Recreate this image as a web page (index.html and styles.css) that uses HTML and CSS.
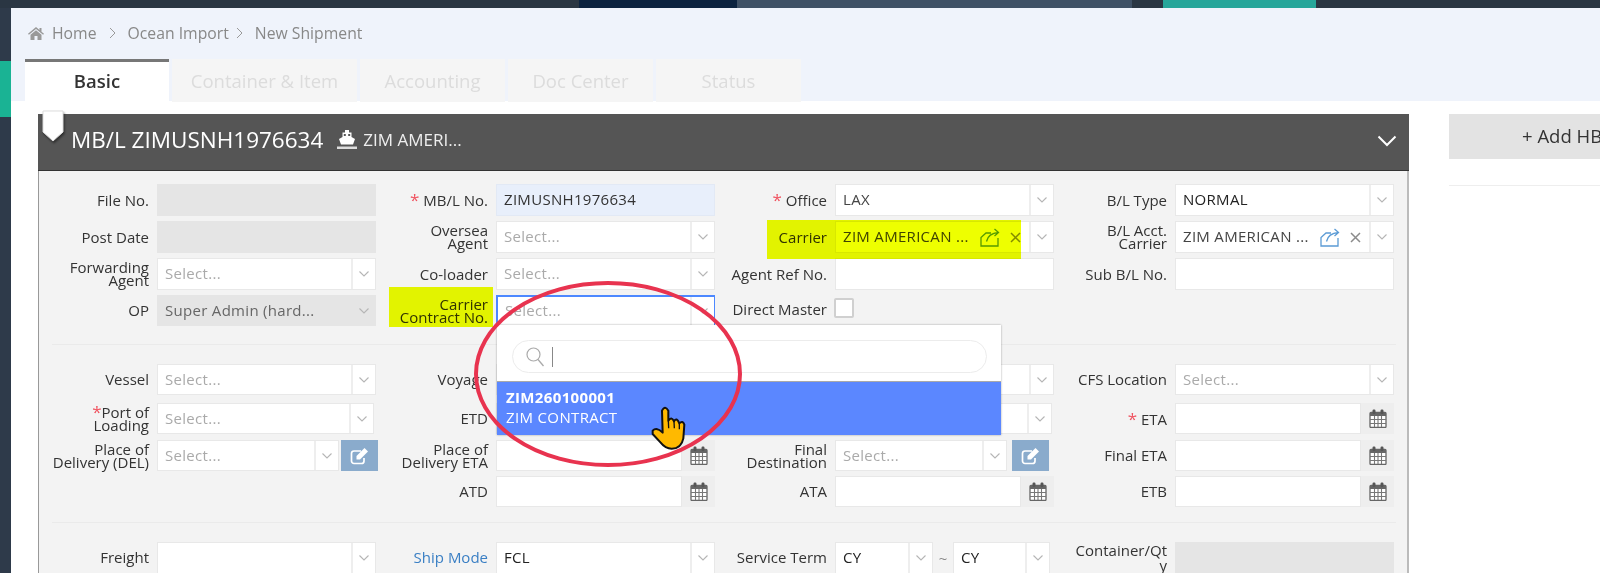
FILE: index.html
```html
<!DOCTYPE html>
<html lang="en">
<head>
<meta charset="utf-8">
<title>New Shipment</title>
<link rel="stylesheet" href="styles.css">
</head>
<body>
<svg class="defs" aria-hidden="true">
  <symbol id="chev" viewBox="0 0 12 8"><path d="M1.500 1.500 6 6l4.500-4.500" fill="none" stroke="#b5b5b5" stroke-width="1.100"/></symbol>
  <symbol id="cal" viewBox="0 0 18 19"><rect x="1" y="3.500" width="16" height="15" rx="1" fill="#fff" stroke="#666" stroke-width="1.300"/><rect x="1" y="3" width="16" height="4" fill="#666"/><path d="M1 10.500h16M1 14.500h16M5.500 7v11M9 7v11M12.500 7v11" stroke="#777" stroke-width="1.100"/><rect x="3.500" y="0.500" width="3" height="4.500" rx="1.200" fill="#555"/><rect x="11.500" y="0.500" width="3" height="4.500" rx="1.200" fill="#555"/></symbol>
  <symbol id="edit" viewBox="0 0 20 18"><path d="M14 11v3a2.500 2.500 0 0 1-2.500 2.500H4A2.500 2.500 0 0 1 1.500 14V6.500A2.500 2.500 0 0 1 4 4h7" fill="none" stroke="#fff" stroke-width="1.700"/><path d="M6.500 9 14.500 1l3.500 3.500-8 8H6.500z" fill="#fff"/></symbol>
  <symbol id="share" viewBox="0 0 20 19"><path d="M11 5H6L1 9.500V18h17V10" fill="none" stroke="#5b9bd5" stroke-width="1.300"/><path d="M6.500 13.500C7.500 8.500 11.500 5 18.500 4.500M14.500 1l4 3.500-4 3.500" fill="none" stroke="#5b9bd5" stroke-width="1.300"/></symbol>
  <symbol id="xmark" viewBox="0 0 11 11"><path d="M1 1l9 9M10 1l-9 9" stroke="#8b8b8b" stroke-width="1.500" fill="none"/></symbol>
</svg>

<div class="page">
  <div class="topbar">
    <i class="seg seg-a"></i><i class="seg seg-b"></i><i class="seg seg-c"></i><i class="seg seg-d"></i><i class="seg seg-e"></i><i class="seg seg-f"></i>
  </div>
  <div class="shell">
    <aside class="sidebar"><div class="side-active"></div></aside>
    <main class="main">
      <header class="head">
        <nav class="crumbs">
          <svg class="home" viewBox="0 0 16 13"><path d="M8 0 0 6.800l.9 1L8 2l7.100 5.800.9-1L13.500 4.800V1h-2v2L8 0zM8 3.200 2.500 7.700V13h4V9h3v4h4V7.700z" fill="#999"/></svg>
          <span>Home</span>
          <svg class="sep" viewBox="0 0 7 12"><path d="M1 1l5 5-5 5" fill="none" stroke="#999"/></svg>
          <span>Ocean Import</span>
          <svg class="sep sep-near" viewBox="0 0 7 12"><path d="M1 1l5 5-5 5" fill="none" stroke="#999"/></svg>
          <span>New Shipment</span>
        </nav>
        <div class="tabs">
          <div class="tab tab-on">Basic</div>
          <div class="tab tab-wide">Container &amp; Item</div>
          <div class="tab">Accounting</div>
          <div class="tab">Doc Center</div>
          <div class="tab">Status</div>
        </div>
      </header>

      <div class="content">
        <section class="panel">
          <div class="panel-head">
            <svg class="ribbon" viewBox="0 0 24 32"><path d="M2 1h20v21l-10 9L2 22z" fill="#fff" stroke="#ddd"/></svg>
            <h1 class="mbl">MB/L ZIMUSNH1976634</h1>
            <svg class="ship" viewBox="0 0 20 19"><path d="M8 0h4v2.500h2.500V7L18 9l-2 5.500H4L2 9l3.500-2V2.500H8z" fill="#fff"/><rect x="6.800" y="4" width="2" height="2" fill="#555"/><rect x="11.200" y="4" width="2" height="2" fill="#555"/><path d="M0 16.500h20v2.500H0z" fill="#ddd"/></svg>
            <span class="carrier-name">ZIM AMERI...</span>
            <svg class="collapse" viewBox="0 0 20 12"><path d="M1.500 1.500 10 10l8.500-8.500" fill="none" stroke="#fff" stroke-width="2"/></svg>
          </div>

          <div class="panel-body">
            <div class="fields rows-a">
              <label class="lbl">File No.</label><div class="inp off"></div>
              <label class="lbl"><span><em>*</em> MB/L No.</span></label><div class="inp tint">ZIMUSNH1976634</div>
              <label class="lbl"><span><em>*</em> Office</span></label><div class="sel"><span class="val dark">LAX</span><span class="arr"><svg><use href="#chev"/></svg></span></div>
              <label class="lbl">B/L Type</label><div class="sel"><span class="val ink">NORMAL</span><span class="arr"><svg><use href="#chev"/></svg></span></div>

              <label class="lbl">Post Date</label><div class="inp off"></div>
              <label class="lbl"><span>Oversea<br>Agent</span></label><div class="sel"><span class="val ph">Select...</span><span class="arr"><svg><use href="#chev"/></svg></span></div>
              <label class="lbl">Carrier</label><div class="sel"><span class="val dark">ZIM AMERICAN ...</span><svg class="ic-share"><use href="#share"/></svg><svg class="ic-x"><use href="#xmark"/></svg><span class="arr"><svg><use href="#chev"/></svg></span></div>
              <label class="lbl"><span>B/L Acct.<br>Carrier</span></label><div class="sel"><span class="val dark">ZIM AMERICAN ...</span><svg class="ic-share"><use href="#share"/></svg><svg class="ic-x"><use href="#xmark"/></svg><span class="arr"><svg><use href="#chev"/></svg></span></div>

              <label class="lbl"><span>Forwarding<br>Agent</span></label><div class="sel"><span class="val ph">Select...</span><span class="arr"><svg><use href="#chev"/></svg></span></div>
              <label class="lbl">Co-loader</label><div class="sel"><span class="val ph">Select...</span><span class="arr"><svg><use href="#chev"/></svg></span></div>
              <label class="lbl">Agent Ref No.</label><div class="inp"></div>
              <label class="lbl">Sub B/L No.</label><div class="inp"></div>

              <label class="lbl">OP</label><div class="sel sel-off"><span class="val soft">Super Admin (hard...</span><span class="arr"><svg><use href="#chev"/></svg></span></div>
              <label class="lbl"><span>Carrier<br>Contract No.</span></label>
              <div class="sel sel-open"><span class="val ph">Select...</span><span class="arr"><svg><use href="#chev"/></svg></span>
                <div class="menu">
                  <div class="search">
                    <svg class="lens" viewBox="0 0 18 20"><circle cx="7.500" cy="7.500" r="6.500" fill="none" stroke="#aaa" stroke-width="1.200"/><path d="M12 12.500l5.500 6.500" stroke="#aaa" stroke-width="1.300"/></svg>
                    <i class="caret"></i>
                  </div>
                  <div class="option"><b>ZIM260100001</b><span>ZIM CONTRACT</span></div>
                </div>
              </div>
              <label class="lbl lbl-up">Direct Master</label><div class="check-wrap"><i class="check"></i></div>
              <span class="blank"></span><span class="blank"></span>
            </div>

            <div class="fields rows-b">
              <label class="lbl">Vessel</label><div class="sel"><span class="val ph">Select...</span><span class="arr"><svg><use href="#chev"/></svg></span></div>
              <label class="lbl">Voyage</label><div class="inp"></div>
              <span class="blank"></span><div class="sel"><span class="val ph">Select...</span><span class="arr"><svg><use href="#chev"/></svg></span></div>
              <label class="lbl">CFS Location</label><div class="sel"><span class="val ph">Select...</span><span class="arr"><svg><use href="#chev"/></svg></span></div>

              <label class="lbl"><span><em>*</em>Port of<br>Loading</span></label><div class="sel sel-short"><span class="val ph">Select...</span><span class="arr"><svg><use href="#chev"/></svg></span></div>
              <label class="lbl">ETD</label><div class="date"><span class="inp"></span><span class="addon"><svg><use href="#cal"/></svg></span></div>
              <span class="blank"></span><div class="sel sel-short"><span class="val ph"></span><span class="arr"><svg><use href="#chev"/></svg></span></div>
              <label class="lbl"><span><em>*</em> ETA</span></label><div class="date"><span class="inp"></span><span class="addon"><svg><use href="#cal"/></svg></span></div>

              <label class="lbl"><span>Place of<br>Delivery (DEL)</span></label>
              <div class="with-btn"><div class="sel"><span class="val ph">Select...</span><span class="arr"><svg><use href="#chev"/></svg></span></div><button class="edit-btn"><svg><use href="#edit"/></svg></button></div>
              <label class="lbl"><span>Place of<br>Delivery ETA</span></label><div class="date"><span class="inp"></span><span class="addon"><svg><use href="#cal"/></svg></span></div>
              <label class="lbl"><span>Final<br>Destination</span></label>
              <div class="with-btn with-btn-c"><div class="sel"><span class="val ph">Select...</span><span class="arr"><svg><use href="#chev"/></svg></span></div><button class="edit-btn"><svg><use href="#edit"/></svg></button></div>
              <label class="lbl">Final ETA</label><div class="date"><span class="inp"></span><span class="addon"><svg><use href="#cal"/></svg></span></div>

              <span class="blank"></span><span class="blank"></span>
              <label class="lbl">ATD</label><div class="date"><span class="inp"></span><span class="addon"><svg><use href="#cal"/></svg></span></div>
              <label class="lbl">ATA</label><div class="date"><span class="inp"></span><span class="addon"><svg><use href="#cal"/></svg></span></div>
              <label class="lbl">ETB</label><div class="date"><span class="inp"></span><span class="addon"><svg><use href="#cal"/></svg></span></div>
            </div>

            <div class="fields rows-c">
              <label class="lbl">Freight</label><div class="sel"><span class="val"></span><span class="arr"><svg><use href="#chev"/></svg></span></div>
              <label class="lbl link">Ship Mode</label><div class="sel"><span class="val ink">FCL</span><span class="arr"><svg><use href="#chev"/></svg></span></div>
              <label class="lbl">Service Term</label>
              <div class="pair">
                <div class="sel"><span class="val ink">CY</span><span class="arr"><svg><use href="#chev"/></svg></span></div>
                <span class="tilde">~</span>
                <div class="sel"><span class="val ink">CY</span><span class="arr"><svg><use href="#chev"/></svg></span></div>
              </div>
              <label class="lbl lbl-top"><span>Container/Qt<br>y</span></label><div class="inp off"></div>
            </div>
          </div>
        </section>

        <aside class="side">
          <div class="add-btn">+ Add HBL</div>
          <div class="side-rule"></div>
        </aside>
      </div>
    </main>
  </div>

  <i class="mark mark-contract"></i>
  <i class="mark mark-carrier"></i>
  <svg class="ring" viewBox="0 0 268 186"><ellipse cx="134" cy="93" rx="132" ry="91" fill="none" stroke="#e8334f" stroke-width="4"/></svg>
  <svg class="hand" viewBox="0 0 240 180">
    <path d="M38 92Q50 80 68 98L66 32Q75 14 85 32L85 62Q94 48 102 64Q110 50 118 70Q128 60 133 74L130 115Q124 146 95 146Q76 146 62 128L38 102Z" fill="#ffb900" stroke="#111" stroke-width="6" stroke-linejoin="round"/>
    <path d="M85 62 86 85M102 64 103 85M118 70 118 88" stroke="#111" stroke-width="4" fill="none"/>
  </svg>
</div>
</body>
</html>
```
FILE: styles.css
```css
* { box-sizing: border-box; }
html, body { margin: 0; padding: 0; background: #fff; }
body { font-family: "Open Sans", "Noto Sans", sans-serif; font-size: 15px; color: #333; overflow: hidden; }
.defs { position: absolute; width: 0; height: 0; }
.page { position: relative; width: 1600px; height: 573px; overflow: hidden; }

.topbar { display: flex; height: 8px; }
.seg { display: block; height: 100%; }
.seg-a { width: 579px; background: #2a3643; }
.seg-b { width: 158px; background: #0c2340; }
.seg-c { width: 395px; background: #3f5166; }
.seg-d { width: 31px; background: #2a3643; }
.seg-e { width: 153px; background: #26a69a; }
.seg-f { flex: 1; background: #2a3643; }

.shell { display: flex; height: 565px; }
.sidebar { width: 11px; background: #2e3a4a; padding-top: 53px; flex: none; }
.side-active { height: 56px; background: #1ab394; }
.main { flex: 1; min-width: 0; }

.head { height: 93px; background: #eff3fb; padding: 15px 0 0 14px; }
.crumbs { display: flex; align-items: center; height: 20px; padding-left: 3px; color: #888; font-size: 15.75px; }
.home { width: 16px; height: 13px; margin-right: 8px; }
.sep { width: 7px; height: 12px; margin: 0 12px 0 12px; }
.sep-near { margin: 0 12px 0 7px; }
.tabs { display: flex; gap: 3px; margin-top: 16px; position: relative; }
.tab { width: 145px; height: 43px; background: #f5f5f5; color: #dcdcdc; font-size: 18.5px; display: flex; align-items: center; justify-content: center; padding-bottom: 1px; }
.tab-on { width: 144px; }
.tab-wide { width: 185px; }
.tab-on { background: #fff; color: #333; font-weight: 600; border-top: 3px solid #777; padding-bottom: 3px; }

.content { display: flex; padding: 13px 0 0 27px; }
.panel { width: 1371px; flex: none; }
.panel-head { position: relative; display: flex; align-items: center; height: 57px; background: #555; border-bottom: 1px solid #333; padding: 0 0 5px 33px; color: #fff; }
.ribbon { position: absolute; left: 3px; top: -4px; width: 24px; height: 32px; filter: drop-shadow(1px 2px 1px rgba(0,0,0,.45)); }
.mbl { margin: 0; font-size: 22.5px; font-weight: 400; color: #fff; }
.ship { width: 20px; height: 19px; margin: 0 6px 0 14px; }
.carrier-name { font-size: 17px; color: #eee; }
.collapse { width: 20px; height: 12px; margin-left: auto; margin-right: 12px; margin-top: 3px; }

.panel-body { height: 402px; background: #f3f3f3; border-left: 1px solid #999; border-right: 2px solid #bbb; padding: 0 11px 0 13px; }
.fields { display: grid; grid-template-columns: 97px 219px 104px 219px 104px 219px 105px 219px; column-gap: 8px; padding-right: 2px; }
.rows-a { grid-template-rows: 32px 32px 32px 31px; row-gap: 5px; padding-top: 13px; padding-bottom: 18px; border-bottom: 1px solid #eaeaea; }
.rows-b { grid-template-rows: 39px 37px 36px 30px; padding-top: 19px; padding-bottom: 16px; border-bottom: 1px solid #eaeaea; }
.rows-b > * { height: 31px; }
.rows-c { grid-template-rows: 32px; padding-top: 19px; }

.lbl { display: flex; align-items: center; justify-content: flex-end; text-align: right; font-size: 15px; line-height: 13px; color: #333; white-space: nowrap; }
.lbl-up { padding-bottom: 3px; }
.lbl-top { align-items: flex-start; padding-top: 1px; line-height: 15px; }
.rows-c .lbl { padding-bottom: 1px; }
.lbl em { color: #f0525f; font-style: normal; font-size: 17px; }
.link { color: #3a7fc4; }

.inp { display: flex; align-items: center; background: #fff; border: 1px solid #e8e8e8; padding: 0 7px 2px; font-size: 15px; letter-spacing: .3px; color: #333; }
.off { background: #e5e5e5; border-color: #e5e5e5; }
.tint { background: #e8effb; border-color: #e2e9f5; }

.sel { position: relative; display: flex; align-items: center; background: #fff; border: 1px solid #e8e8e8; min-width: 0; }
.val { flex: 1; min-width: 0; padding: 0 0 2px 7px; font-size: 15px; letter-spacing: .3px; white-space: nowrap; overflow: hidden; }
.ph { color: #aaa; }
.dark { color: #444; }
.ink { color: #222; }
.soft { color: #666; }
.arr { flex: none; width: 24px; height: 100%; border-left: 2px solid #eee; display: flex; align-items: center; justify-content: center; background: #fff; }
.arr svg { width: 12px; height: 8px; }
.sel-off, .sel-off .arr { background: #e5e5e5; border-color: #e5e5e5; }
.sel-short { width: 217px; }
.ic-share { flex: none; width: 20px; height: 19px; margin-right: 10px; }
.ic-x { flex: none; width: 11px; height: 11px; margin-right: 8px; }

.sel-open { border: 1px solid #4d88ff; border-width: 2px 1px 1px 2px; z-index: 3; }
.sel-open .arr { border-left-color: #eee; }
.menu { position: absolute; left: -1px; top: 28px; width: 504px; height: 110px; background: #fff; box-shadow: 0 0 2px rgba(0,0,0,.35); padding-top: 15px; }
.search { display: flex; align-items: center; width: 475px; height: 33px; margin-left: 15px; border: 1px solid #ececec; border-radius: 17px; background: #fff; padding-left: 13px; }
.lens { width: 18px; height: 20px; }
.caret { display: block; width: 1px; height: 20px; background: #888; margin-left: 8px; }
.option { display: flex; flex-direction: column; justify-content: center; height: 54px; margin-top: 8px; padding: 0 0 3px 9px; background: #5b87ff; color: #fff; font-size: 15px; line-height: 20px; border-top: 1px solid #a9a9a9; letter-spacing: .35px; }
.option b { font-weight: 700; }

.check-wrap { display: flex; align-items: flex-start; padding-top: 3px; }
.check { display: block; width: 20px; height: 20px; background: #fff; border: 2px solid #d0d0d0; border-radius: 2px; margin-left: -1px; }

.date { display: flex; }
.date .inp { flex: 1; }
.addon { flex: none; width: 33px; background: #eee; display: flex; align-items: center; justify-content: center; }
.addon svg { width: 18px; height: 19px; }

.with-btn { display: flex; gap: 2px; width: 221px; }
.with-btn .sel { flex: 1; }
.edit-btn { flex: none; width: 37px; height: 31px; padding: 0; border: 0; background: #8aabcc; display: flex; align-items: center; justify-content: center; }
.edit-btn svg { width: 20px; height: 18px; }
.with-btn-c { width: 214px; gap: 5px; }

.pair { display: flex; align-items: stretch; width: 215px; }
.pair .sel { width: 98px; flex: none; }
.pair .sel:last-child { width: 97px; }
.tilde { width: 20px; display: flex; align-items: center; justify-content: center; color: #888; }

.side { flex: none; margin-left: 40px; width: 300px; }
.add-btn { height: 45px; width: 300px; background: #e3e3e3; color: #333; font-size: 18.5px; display: flex; align-items: center; padding-left: 73px; padding-bottom: 3px; }
.side-rule { height: 1px; margin-top: 26px; background: #eee; }

.mark { position: absolute; display: block; background: #eeff00; mix-blend-mode: multiply; z-index: 4; }
.mark-contract { left: 389px; top: 287px; width: 104px; height: 40px; }
.mark-carrier { left: 767px; top: 220px; width: 254px; height: 39px; }
.ring { position: absolute; left: 474px; top: 281px; width: 268px; height: 186px; z-index: 5; }
.hand { position: absolute; left: 640px; top: 400px; width: 80px; height: 60px; z-index: 6; }
```
